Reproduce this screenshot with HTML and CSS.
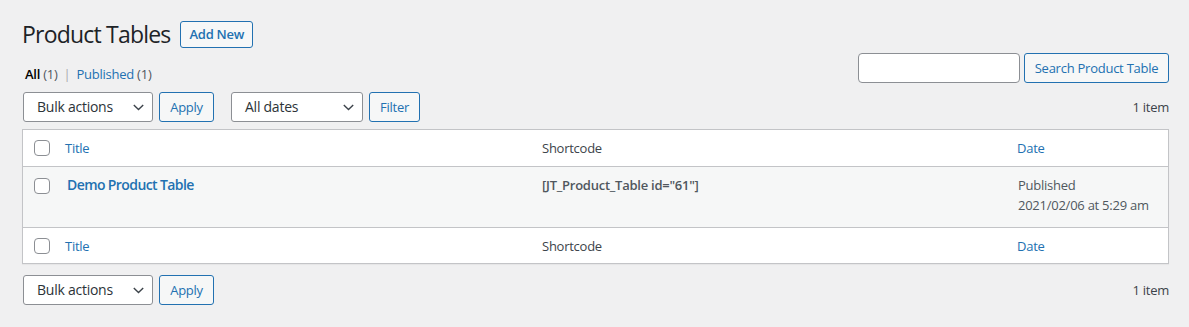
FILE: index.html
```html
<!DOCTYPE html>
<html lang="en">
<head>
<meta charset="utf-8">
<title>Product Tables</title>
<link rel="stylesheet" href="styles.css">
</head>
<body>
<div class="wrap">
  <div class="page-head">
    <h1 class="page-title">Product Tables</h1>
    <a class="title-action" href="#">Add New</a>
  </div>

  <div class="filter-row">
    <ul class="subsubsub">
      <li class="current">All <span class="count">(1)</span></li>
      <li class="sep">|</li>
      <li><a href="#">Published <span class="count">(1)</span></a></li>
    </ul>
    <div class="search-box">
      <input class="search-input" type="search">
      <button class="btn btn-search">Search Product Table</button>
    </div>
  </div>

  <div class="tablenav">
    <div class="actions">
      <div class="select select-bulk"><span>Bulk actions</span>
        <svg class="chev" width="11" height="7" viewBox="0 0 11 7"><path d="M0.8 1l4.7 4.6L10.2 1" fill="none" stroke="#3c434a" stroke-width="1.4"/></svg>
      </div>
      <button class="btn btn-apply">Apply</button>
      <div class="select select-dates"><span>All dates</span>
        <svg class="chev" width="11" height="7" viewBox="0 0 11 7"><path d="M0.8 1l4.7 4.6L10.2 1" fill="none" stroke="#3c434a" stroke-width="1.4"/></svg>
      </div>
      <button class="btn btn-filter">Filter</button>
    </div>
    <div class="displaying-num">1 item</div>
  </div>

  <table class="list-table">
    <colgroup>
      <col class="col-check">
      <col class="col-title">
      <col class="col-short">
      <col class="col-date">
    </colgroup>
    <thead>
      <tr>
        <th class="check-column"><input class="cb" type="checkbox"></th>
        <th class="sortable"><a href="#">Title</a></th>
        <th class="plain">Shortcode</th>
        <th class="sortable date-head"><a href="#">Date</a></th>
      </tr>
    </thead>
    <tbody>
      <tr>
        <td class="check-column"><input class="cb" type="checkbox"></td>
        <td class="title-cell"><a class="row-title" href="#">Demo Product Table</a></td>
        <td class="short-cell">[JT_Product_Table id="61"]</td>
        <td class="date-cell">Published<br>2021/02/06 at 5:29 am</td>
      </tr>
    </tbody>
    <tfoot>
      <tr>
        <th class="check-column"><input class="cb" type="checkbox"></th>
        <th class="sortable"><a href="#">Title</a></th>
        <th class="plain">Shortcode</th>
        <th class="sortable date-head"><a href="#">Date</a></th>
      </tr>
    </tfoot>
  </table>

  <div class="tablenav bottom">
    <div class="actions">
      <div class="select select-bulk"><span>Bulk actions</span>
        <svg class="chev" width="11" height="7" viewBox="0 0 11 7"><path d="M0.8 1l4.7 4.6L10.2 1" fill="none" stroke="#3c434a" stroke-width="1.4"/></svg>
      </div>
      <button class="btn btn-apply">Apply</button>
    </div>
    <div class="displaying-num">1 item</div>
  </div>
</div>
</body>
</html>
```

FILE: styles.css
```css
html, body {
  margin: 0;
  padding: 0;
}
body {
  background: #f0f0f1;
  color: #3c434a;
  font-family: "Open Sans", "Noto Sans", sans-serif;
  font-size: 13px;
  line-height: 1.4;
  letter-spacing: -0.25px;
}
a {
  color: #2271b1;
  text-decoration: none;
}
.wrap {
  padding: 10px 20px 0 22px;
}

/* heading */
.page-head {
  display: flex;
  align-items: center;
  padding: 9px 0 4px;
}
.page-title {
  margin: 0;
  font-size: 23px;
  line-height: 30px;
  font-weight: 400;
  color: #1d2327;
  letter-spacing: -0.8px;
}
.title-action {
  margin-left: 10px;
  box-sizing: border-box;
  height: 27px;
  padding: 0 8px;
  display: flex;
  align-items: center;
  border: 1px solid #2271b1;
  border-radius: 3px;
  background: #f6f7f7;
  color: #2271b1;
  font-size: 13px;
  font-weight: 600;
}

/* views + search */
.filter-row {
  display: flex;
  justify-content: space-between;
  align-items: flex-start;
}
.subsubsub {
  list-style: none;
  margin: 8px 0 0;
  padding: 0 0 0 3px;
  display: flex;
  gap: 0;
  line-height: 26px;
  font-size: 13px;
  color: #646970;
}
.subsubsub li { margin: 0; }
.subsubsub .current { color: #000; font-weight: 600; }
.subsubsub .count { color: #50575e; font-weight: 400; }
.subsubsub .sep { color: #a7aaad; margin: 0 6px 0 6px; }

.search-box {
  display: flex;
  gap: 4px;
}
.search-input {
  box-sizing: border-box;
  width: 162px;
  height: 30px;
  margin: 0;
  border: 1px solid #8c8f94;
  border-radius: 4px;
  background: #fff;
  font-family: inherit;
  outline: none;
}

/* buttons */
.btn {
  box-sizing: border-box;
  height: 30px;
  margin: 0;
  padding: 0 10px;
  border: 1px solid #2271b1;
  border-radius: 3px;
  background: #f6f7f7;
  color: #2271b1;
  font-family: inherit;
  font-size: 13px;
  letter-spacing: -0.25px;
  white-space: nowrap;
  display: flex;
  align-items: center;
  justify-content: center;
}
.btn-search { width: 145px; }
.btn-apply { width: 55px; margin-left: 6px; }
.btn-filter { width: 51px; margin-left: 6px; }

/* tablenav */
.tablenav {
  margin-top: 5px;
  height: 30px;
  display: flex;
  justify-content: space-between;
  align-items: center;
}
.tablenav.bottom { margin-top: 11px; }
.actions {
  display: flex;
  align-items: center;
}
.select {
  box-sizing: border-box;
  height: 30px;
  padding: 0 8px 0 13px;
  border: 1px solid #8c8f94;
  border-radius: 3px;
  background: #fff;
  color: #2c3338;
  font-size: 14px;
  display: flex;
  align-items: center;
  justify-content: space-between;
}
.select-bulk { width: 130px; margin-left: 1px; }
.select-dates { width: 132px; margin-left: 17px; }
.chev { display: block; }
.displaying-num {
  color: #3c434a;
  font-size: 13px;
}

/* table */
.list-table {
  width: 1147px;
  table-layout: fixed;
  border-collapse: separate;
  border-spacing: 0;
  border: 1px solid #c3c4c7;
  background: #fff;
  margin-top: 7px;
  box-shadow: 0 1px 1px rgba(0, 0, 0, 0.04);
}
.col-check { width: 34px; }
.col-title { width: 475px; }
.col-short { width: 476px; }
.col-date { width: 160px; }

.list-table th {
  text-align: left;
  font-weight: 400;
  font-size: 13px;
  line-height: 20px;
  color: #3c434a;
  padding: 8px 10px;
}
.list-table thead th { border-bottom: 1px solid #c3c4c7; }
.list-table tfoot th {
  border-top: 1px solid #c3c4c7;
  padding-top: 8px;
  padding-bottom: 7px;
}
.list-table th.sortable { padding-left: 8px; }
.list-table th.date-head { padding-left: 9px; }

.list-table .check-column {
  padding: 10px 0 0 11px;
  vertical-align: top;
}
.list-table thead .check-column,
.list-table tfoot .check-column {
  padding: 0 0 0 11px;
  vertical-align: middle;
}
.cb {
  -webkit-appearance: none;
  appearance: none;
  display: block;
  box-sizing: border-box;
  width: 16px;
  height: 16px;
  margin: 0;
  border: 1px solid #8c8f94;
  border-radius: 4px;
  background: #fff;
}

.list-table tbody tr {
  background: #f6f7f7;
  height: 60px;
}
.list-table tbody td {
  vertical-align: top;
  padding: 8px 10px 0;
  font-size: 13px;
  line-height: 20px;
  color: #50575e;
}
.list-table tbody td.check-column { padding: 11px 0 0 11px; }
.row-title {
  font-size: 14px;
  font-weight: 600;
  letter-spacing: -0.6px;
}
.short-cell {
  font-weight: 600;
}
```
